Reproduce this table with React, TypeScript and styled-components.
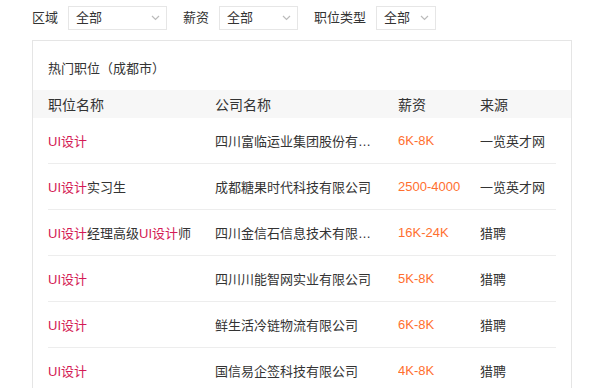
import styled, { createGlobalStyle } from "styled-components";

const GlobalStyle = createGlobalStyle`
    html, body {
        margin: 0;
        padding: 0;
        background: #fff;
    }
    body {
        font-family: "Liberation Sans", "Noto Sans CJK SC", sans-serif;
        color: #333;
        overflow: hidden;
    }
`;

const Page = styled.div`
    padding: 6px 0 0 32px;
`;

const FilterBar = styled.div`
    display: flex;
    align-items: center;
    height: 24px;
    font-size: 13px;
`;

const FilterLabel = styled.span`
    margin-right: 10px;
    line-height: 24px;
`;

const Select = styled.div<{ $width: number }>`
    position: relative;
    box-sizing: border-box;
    width: ${(p) => p.$width}px;
    height: 24px;
    margin-right: 16px;
    padding-left: 7px;
    border: 1px solid #e6e6e6;
    line-height: 22px;
    color: #333;
    display: flex;
    align-items: center;
    justify-content: space-between;
    .arrow {
        margin-right: 6px;
        width: 9px;
        height: 6px;
    }
`;

const Card = styled.div`
    margin-top: 10px;
    width: 540px;
    box-sizing: border-box;
    border: 1px solid #e5e5e5;
    border-bottom: none;
`;

const CardTitle = styled.div`
    padding: 18px 15px 11px;
    line-height: 20px;
    font-size: 13px;
    color: #333;
`;

const Grid = styled.div`
    display: grid;
    grid-template-columns: 167px 183px 82px 1fr;
    align-items: center;
`;

const HeadRow = styled(Grid)`
    height: 28px;
    padding: 0 15px;
    background: #f7f7f7;
    font-size: 14px;
    color: #333;
`;

const Row = styled(Grid)`
    height: 45px;
    margin: 0 15px;
    border-bottom: 1px solid #ededed;
    font-size: 13px;
`;

const Cell = styled.div`
    white-space: nowrap;
    overflow: hidden;
    text-overflow: ellipsis;
`;

const CompanyCell = styled(Cell)`
    max-width: 160px;
`;

const Key = styled.span`
    color: #d41a55;
`;

const Salary = styled(Cell)`
    color: #ff6f2f;
`;

function Arrow() {
    return (
        <svg className="arrow" viewBox="0 0 9 6">
            <path d="M1 1 L4.5 4.5 L8 1" fill="none" stroke="#bbb" strokeWidth="1.2" />
        </svg>
    );
}

function JobTitle({ text }: { text: string }) {
    const parts = text.split(/(UI设计)/);
    return (
        <Cell>
            {parts.map((p, i) => (p === "UI设计" ? <Key key={i}>{p}</Key> : p))}
        </Cell>
    );
}

const jobs = [
    { title: "UI设计", company: "四川富临运业集团股份有限公司", salary: "6K-8K", source: "一览英才网" },
    { title: "UI设计实习生", company: "成都糖果时代科技有限公司", salary: "2500-4000", source: "一览英才网" },
    { title: "UI设计经理高级UI设计师", company: "四川金信石信息技术有限公司", salary: "16K-24K", source: "猎聘" },
    { title: "UI设计", company: "四川川能智网实业有限公司", salary: "5K-8K", source: "猎聘" },
    { title: "UI设计", company: "鲜生活冷链物流有限公司", salary: "6K-8K", source: "猎聘" },
    { title: "UI设计", company: "国信易企签科技有限公司", salary: "4K-8K", source: "猎聘" },
];

export default function App() {
    return (
        <>
            <GlobalStyle />
            <Page>
                <FilterBar>
                    <FilterLabel>区域</FilterLabel>
                    <Select $width={99}>
                        全部
                        <Arrow />
                    </Select>
                    <FilterLabel>薪资</FilterLabel>
                    <Select $width={79}>
                        全部
                        <Arrow />
                    </Select>
                    <FilterLabel>职位类型</FilterLabel>
                    <Select $width={60}>
                        全部
                        <Arrow />
                    </Select>
                </FilterBar>
                <Card>
                    <CardTitle>热门职位（成都市）</CardTitle>
                    <HeadRow>
                        <div>职位名称</div>
                        <div>公司名称</div>
                        <div>薪资</div>
                        <div>来源</div>
                    </HeadRow>
                    {jobs.map((job, i) => (
                        <Row key={i}>
                            <JobTitle text={job.title} />
                            <CompanyCell>{job.company}</CompanyCell>
                            <Salary>{job.salary}</Salary>
                            <Cell>{job.source}</Cell>
                        </Row>
                    ))}
                </Card>
            </Page>
        </>
    );
}
